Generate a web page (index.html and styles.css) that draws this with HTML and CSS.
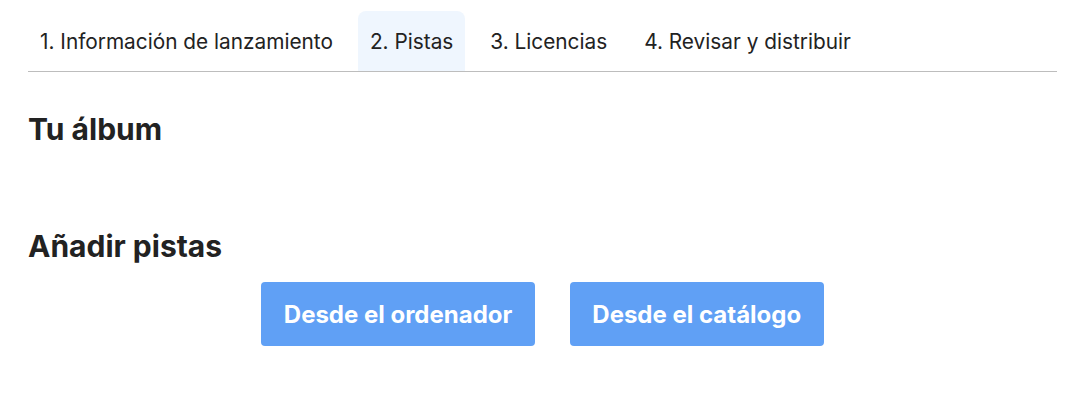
FILE: index.html
```html
<!DOCTYPE html>
<html lang="es">
<head>
<meta charset="utf-8">
<title>Pistas</title>
<link rel="stylesheet" href="styles.css">
</head>
<body>
<div class="page">
  <nav class="tabs">
    <div class="tab">1. Información de lanzamiento</div>
    <div class="tab active">2. Pistas</div>
    <div class="tab">3. Licencias</div>
    <div class="tab">4. Revisar y distribuir</div>
  </nav>
  <h2 class="title album">Tu álbum</h2>
  <h2 class="title add">Añadir pistas</h2>
  <div class="actions">
    <button class="btn">Desde el ordenador</button>
    <button class="btn">Desde el catálogo</button>
  </div>
</div>
</body>
</html>
```
FILE: styles.css
```css
html, body {
  margin: 0;
  padding: 0;
  background: #ffffff;
}
body {
  font-family: Inter, "Noto Sans", sans-serif;
  color: #222222;
}
.page {
  padding: 11px 21px 0 28px;
}
.tabs {
  display: flex;
  gap: 13px;
  border-bottom: 1px solid #bdbdbd;
}
.tab {
  height: 60px;
  padding: 0 12px;
  display: flex;
  align-items: center;
  font-size: 20.8px;
  color: #222222;
  border-radius: 8px 8px 0 0;
}
.tab.active {
  background: #eff6fe;
}
.title {
  margin: 0;
  font-size: 30px;
  font-weight: 700;
  color: #222222;
  line-height: 36px;
}
.album {
  margin-top: 39px;
}
.add {
  margin-top: 81px;
}
.actions {
  display: flex;
  justify-content: center;
  gap: 35px;
  margin-top: 18px;
}
.btn {
  height: 64px;
  padding: 0 22.5px;
  border: none;
  border-radius: 4px;
  background: #60a0f5;
  color: #ffffff;
  font-family: Inter, "Noto Sans", sans-serif;
  font-size: 24px;
  font-weight: 700;
}
```
